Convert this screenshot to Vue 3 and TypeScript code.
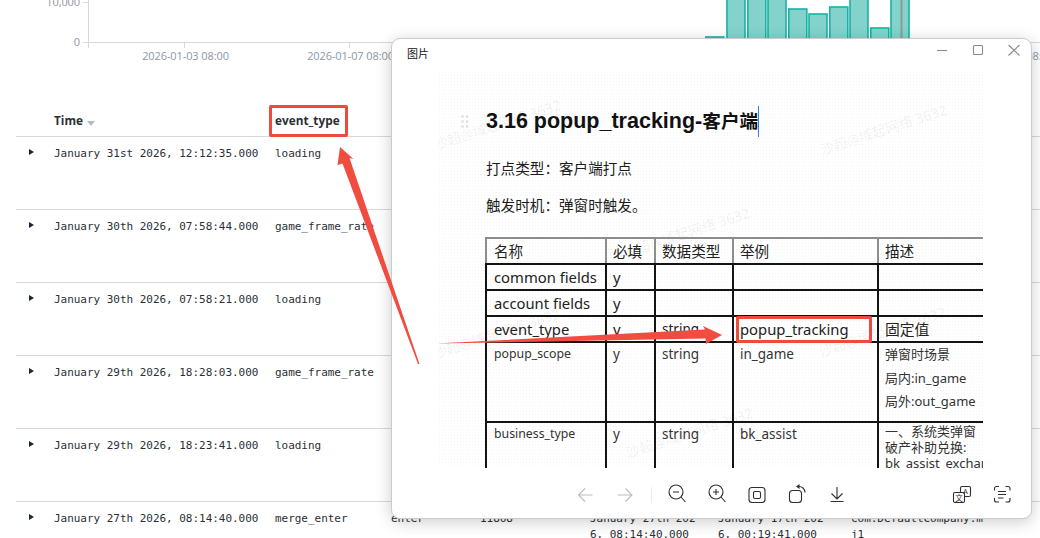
<script setup lang="ts">
const ticks = [
  { x: 184, label: '2026-01-03 08:00' },
  { x: 349, label: '2026-01-07 08:00' },
  { x: 514, label: '2026-01-11 08:00' },
  { x: 679, label: '2026-01-15 08:00' },
  { x: 844, label: '2026-01-19 08:00' },
  { x: 1009, label: '2026-01-23 08:00' },
]
const bars = [
  { x: 705.8, top: 37 }, { x: 727, top: -4 }, { x: 747.8, top: -4 }, { x: 768, top: -4 }, { x: 788.8, top: 9 },
  { x: 809, top: 14 }, { x: 829.8, top: 7 }, { x: 850, top: -4 }, { x: 870.8, top: 28 }, { x: 891, top: -4 },
]
interface Row { time: string; type: string; c3?: string; c4?: string; c5?: string; c6?: string; c7?: string }
const rows: Row[] = [
  { time: 'January 31st 2026, 12:12:35.000', type: 'loading' },
  { time: 'January 30th 2026, 07:58:44.000', type: 'game_frame_rate' },
  { time: 'January 30th 2026, 07:58:21.000', type: 'loading' },
  { time: 'January 29th 2026, 18:28:03.000', type: 'game_frame_rate' },
  { time: 'January 29th 2026, 18:23:41.000', type: 'loading' },
  {
    time: 'January 27th 2026, 08:14:40.000', type: 'merge_enter', c3: 'enter', c4: '11868',
    c5: 'January 27th 2026, 08:14:40.000', c6: 'January 17th 2026, 00:19:41.000', c7: 'com.DefaultCompany.mj1',
  },
]
const marks = [
  { x: 497, y: 124 }, { x: 883, y: 129 }, { x: 686, y: 232 },
  { x: 496, y: 333 }, { x: 882, y: 331 }, { x: 689, y: 432 },
]
const markStyle = (m: { x: number; y: number }) => ({ left: `${m.x - 438}px`, top: `${m.y - 71}px` })
const dots = [0, 1, 2].flatMap((r) => [0, 1].map((c) => ({ cx: 1.5 + c * 4.5, cy: 1.5 + r * 5 })))
</script>

<template>
  <div class="page">
    <svg class="chart" width="1040" height="64" viewBox="0 0 1040 64">
      <g class="bars">
        <rect v-for="b in bars" :key="b.x" :x="b.x" :y="b.top" width="18" :height="43 - b.top" />
      </g>
      <line x1="901.5" y1="0" x2="901.5" y2="42" stroke="#8f9a98" stroke-width="2" />
      <line x1="88.5" y1="0" x2="88.5" y2="48" class="axis" />
      <line x1="83" y1="42.5" x2="1040" y2="42.5" class="axis" />
      <line x1="83" y1="2.5" x2="88" y2="2.5" class="axis" />
      <line v-for="t in ticks" :key="t.x" :x1="t.x + 0.5" y1="42" :x2="t.x + 0.5" y2="48" class="axis" />
      <text x="80" y="6" text-anchor="end" class="lbl">10,000</text>
      <text x="80" y="46" text-anchor="end" class="lbl">0</text>
      <text v-for="t in ticks" :key="t.label" :x="t.x + 1.5" y="60" text-anchor="middle" class="lbl">{{ t.label }}</text>
    </svg>

    <table class="docs">
      <colgroup>
        <col class="c-arrow" /><col class="c-time" /><col class="c-type" /><col class="c-3" />
        <col class="c-4" /><col class="c-5" /><col class="c-6" /><col class="c-7" />
      </colgroup>
      <thead>
        <tr>
          <th></th>
          <th>Time<i class="sort"></i></th>
          <th>event_type</th>
          <th></th><th></th><th></th><th></th><th></th>
        </tr>
      </thead>
      <tbody>
        <tr v-for="r in rows" :key="r.time">
          <td><i class="caret"></i></td>
          <td>{{ r.time }}</td>
          <td>{{ r.type }}</td>
          <td>{{ r.c3 }}</td>
          <td>{{ r.c4 }}</td>
          <td>{{ r.c5 }}</td>
          <td class="c6-cell">{{ r.c6 }}</td>
          <td class="last">{{ r.c7 }}</td>
        </tr>
      </tbody>
    </table>

    <div class="box box-header"></div>

    <section class="win">
      <header class="win-bar">
        <span class="win-title">图片</span>
        <div class="win-ctl">
          <svg width="16" height="16" viewBox="0 0 16 16"><path d="M3 8.5H13" /></svg>
          <svg width="16" height="16" viewBox="0 0 16 16"><rect x="3.5" y="3.5" width="9" height="9" rx="1" /></svg>
          <svg width="16" height="16" viewBox="0 0 16 16"><path d="M2.5 3L13.5 13.5M13.5 3L2.5 13.5" /></svg>
        </div>
      </header>

      <div class="shot">
        <span v-for="(m, i) in marks" :key="i" class="mark" :style="markStyle(m)">沙超@域起网络 3632</span>
        <div class="doc-head">
          <svg class="drag" width="8" height="14" viewBox="0 0 8 14">
            <circle v-for="(d, i) in dots" :key="i" :cx="d.cx" :cy="d.cy" r="1.3" />
          </svg>
          <h1>3.16 popup_tracking-<span class="cjk">客户端</span></h1>
        </div>
        <p class="p1">打点类型：客户端打点</p>
        <p class="p2">触发时机：弹窗时触发。</p>
        <table class="spec">
          <colgroup>
            <col class="s1" /><col class="s2" /><col class="s3" /><col class="s4" /><col class="s5" />
          </colgroup>
          <thead>
            <tr><th class="first">名称</th><th>必填</th><th>数据类型</th><th>举例</th><th>描述</th></tr>
          </thead>
          <tbody>
            <tr class="big"><td class="first">common fields</td><td>y</td><td></td><td></td><td></td></tr>
            <tr class="big"><td class="first">account fields</td><td>y</td><td></td><td></td><td></td></tr>
            <tr class="big"><td class="first">event_type</td><td>y</td><td class="mid">string</td><td>popup_tracking</td><td>固定值</td></tr>
            <tr class="tall">
              <td class="sm first">popup_scope</td><td>y</td><td>string</td><td>in_game</td>
              <td><div class="ln">弹窗时场景</div><div class="ln">局内:in_game</div><div class="ln">局外:out_game</div></td>
            </tr>
            <tr class="tail">
              <td class="sm first">business_type</td><td>y</td><td>string</td><td>bk_assist</td>
              <td class="tight"><div>一、系统类弹窗</div><div>破产补助兑换:</div><div>bk_assist_exchange</div></td>
            </tr>
          </tbody>
        </table>
      </div>

      <footer class="tools">
        <svg class="ic off" width="24" height="24" viewBox="0 0 24 24"><path d="M19.5 12H5.5M12 5.5L5.5 12L12 18.5" /></svg>
        <svg class="ic off" width="24" height="24" viewBox="0 0 24 24"><path d="M5 12H19M12.5 5.5L19 12L12.5 18.5" /></svg>
        <i class="sep"></i>
        <div class="tool-group">
          <svg class="ic" width="24" height="24" viewBox="0 0 24 24"><circle cx="12" cy="9" r="7" /><path d="M17 14L21.5 19M9 9H15" /></svg>
          <svg class="ic" width="24" height="24" viewBox="0 0 24 24"><circle cx="12" cy="9" r="7" /><path d="M17 14L21.5 19M9 9H15M12 6V12" /></svg>
          <svg class="ic" width="24" height="24" viewBox="0 0 24 24"><rect x="5" y="4.5" width="16" height="15" rx="3" /><rect x="9.5" y="8.5" width="7" height="7" rx="1.5" /></svg>
          <svg class="ic" width="24" height="24" viewBox="0 0 24 24"><rect x="5.5" y="7.5" width="12" height="12" rx="3" /><path d="M14 3.5C18 3 21 6 21 9.5" /><path class="solid" d="M15.5 1L12 3.5L15.5 6Z" /></svg>
          <svg class="ic" width="24" height="24" viewBox="0 0 24 24"><path d="M13 4V16M7.5 10.5L13 16L18.5 10.5M6.5 18.5H19.5" /></svg>
        </div>
        <div class="tool-right">
          <svg class="ic" width="24" height="24" viewBox="0 0 24 24">
            <rect x="11.5" y="3.5" width="10" height="10" rx="1.5" />
            <rect class="plate" x="4.5" y="9.5" width="11" height="10" rx="1.5" />
            <text x="16.5" y="10.5" text-anchor="middle" class="gl">A</text>
            <text x="10" y="17.5" text-anchor="middle" class="gl">文</text>
          </svg>
          <svg class="ic" width="24" height="24" viewBox="0 0 24 24">
            <path d="M9 3.5H6.5A2 2 0 0 0 4.5 5.5V7.5M15.5 3.5H18A2 2 0 0 1 20 5.5V7.5M4.5 15V17A2 2 0 0 0 6.5 19H9M20 15V17A2 2 0 0 1 18 19H15.5M8 8.5H16M8 11.5H16M8 15H13.5" />
          </svg>
        </div>
      </footer>
    </section>

    <div class="box box-example"></div>
    <svg class="arrows" width="1040" height="538" viewBox="0 0 1040 538">
      <polygon points="340,147 353.5,159 349.5,158 419.5,364 418,364 342.5,163.5 337.5,165" />
      <polygon points="436,343.5 705,329.5 703,326 722,335 706,344 705.5,338.5" />
    </svg>
  </div>
</template>

<style>
html, body { margin: 0; background: #fff; }
</style>

<style scoped>
.page {
  position: relative;
  width: 1040px;
  height: 538px;
  overflow: hidden;
  background: #fff;
  font-family: "Open Sans", "Noto Sans CJK SC", sans-serif;
}
.chart { display: block; }
.bars rect { fill: #83d3cc; stroke: #1ab2a4; stroke-width: 1.6; }
.axis { stroke: #d5d8dc; stroke-width: 1; }
.lbl { font: 11px "Open Sans", sans-serif; fill: #8d97a3; letter-spacing: -0.1px; }

.docs {
  margin-left: 16px;
  width: 1024px;
  table-layout: fixed;
  border-spacing: 0;
  font: 11px/16px "DejaVu Sans Mono", monospace;
  letter-spacing: -0.03px;
  color: #2b3036;
}
.c-arrow { width: 38px; }
.c-time { width: 221px; }
.c-type { width: 116px; }
.c-3 { width: 89px; }
.c-4 { width: 110px; }
.c-5 { width: 128px; }
.c-6 { width: 133px; }
.c-7 { width: 189px; }
.docs th {
  box-sizing: border-box;
  height: 73px;
  vertical-align: bottom;
  text-align: left;
  padding: 0 0 8px;
  border-bottom: 1px solid #d8d8d8;
  font: 700 11.8px/16px "Open Sans", sans-serif;
  letter-spacing: 0;
  color: #2b2f33;
}
.docs td {
  box-sizing: border-box;
  height: 73px;
  vertical-align: top;
  padding: 9px 12px 0 0;
  border-bottom: 1px solid #d8d8d8;
  word-break: break-all;
}
.docs td.c6-cell { padding-right: 22px; }
.docs td.last { padding-right: 53px; }
.sort {
  display: inline-block;
  margin-left: 4px;
  vertical-align: -1px;
  border: 4px solid transparent;
  border-top: 5px solid #b5bac0;
  border-bottom: 0;
}
.caret {
  display: block;
  margin: 3px 0 0 13px;
  border: 3.5px solid transparent;
  border-left: 5px solid #1d2630;
  border-right: 0;
  width: 0;
}

.box {
  position: absolute;
  box-sizing: border-box;
  border: 3px solid #ef4a3e;
  border-radius: 2px;
}
.box-header { left: 269px; top: 105px; width: 79px; height: 32px; }
.box-example { left: 736px; top: 316px; width: 136px; height: 27px; }
.arrows { position: absolute; left: 0; top: 0; pointer-events: none; }
.arrows polygon { fill: #f04c40; }

.win {
  position: absolute;
  left: 391px;
  top: 38px;
  box-sizing: border-box;
  width: 641px;
  height: 481px;
  display: flex;
  flex-direction: column;
  background: #fff;
  border: 1px solid #cbcbcb;
  border-radius: 9px;
  box-shadow: 0 3px 16px rgba(0, 0, 0, 0.2);
  font-family: "Noto Sans", "Noto Sans CJK SC", sans-serif;
}
.win-bar {
  flex: none;
  height: 32px;
  display: flex;
  justify-content: space-between;
  align-items: flex-start;
  padding: 0 9px 0 15px;
}
.win-title { margin-top: 7px; font-size: 11px; line-height: 16px; color: #111; }
.win-ctl { display: flex; gap: 20px; margin-top: 3px; }
.win-ctl svg { fill: none; stroke: #8a8a8a; stroke-width: 1.1; }

.shot {
  position: relative;
  flex: none;
  box-sizing: border-box;
  width: 545px;
  height: 397px;
  margin-left: 46px;
  padding: 35px 0 0 23px;
  overflow: hidden;
  color: #1c1c1c;
  background-color: #fff;
  background-image: radial-gradient(#f6f6f6 0.8px, transparent 1px);
  background-size: 3px 3px;
}
.mark {
  position: absolute;
  transform: translate(-50%, -50%) rotate(-18deg);
  white-space: nowrap;
  font-size: 14px;
  color: rgba(0, 0, 0, 0.07);
  pointer-events: none;
}
.doc-head { display: flex; align-items: center; }
.drag { margin-right: 17px; fill: #dedede; }
h1 {
  margin: 0;
  font: 700 21.5px/30px "Liberation Sans", "Noto Sans CJK SC", sans-serif;
  color: #111;
  border-right: 1px solid #3f7bd9;
}
.cjk { font-size: 18.7px; }
p { margin: 0 0 0 25px; font-size: 14.6px; line-height: 20px; }
.p1 { margin-top: 21px; }
.p2 { margin-top: 17px; }
.spec {
  position: relative;
  margin: 22px 0 0 24px;
  width: 640px;
  table-layout: fixed;
  border-collapse: collapse;
  font-size: 13.5px;
  color: #333;
}
.s1 { width: 120px; }
.s2 { width: 49px; }
.s3 { width: 78px; }
.s4 { width: 145px; }
.s5 { width: 248px; }
.spec th, .spec td {
  box-sizing: border-box;
  padding: 0 0 0 6px;
  vertical-align: top;
  text-align: left;
  font-weight: 400;
  border: 2px solid #141414;
}
.spec th.first, .spec td.first { padding-left: 7px; }
.spec th {
  height: 26px;
  border-color: #8d8d8d;
  border-bottom-color: #141414;
  font-size: 14.6px;
  line-height: 24px;
  color: #222;
}
.spec .big td { height: 26px; font-size: 14.8px; line-height: 24px; color: #222; }
.spec .big .mid { font-size: 13.5px; }
.tall td { height: 80px; line-height: 23px; }
.tail td { height: 80px; line-height: 23px; }
.spec td.sm { font-size: 12.3px; line-height: 22px; }
.ln { line-height: 23.5px; font-size: 13px; }
.spec td.tight { line-height: 16px; font-size: 13px; }

.tools {
  flex: 1;
  display: flex;
  align-items: center;
  padding: 3px 17px 0 181px;
  gap: 16px;
}
.ic { flex: none; fill: none; stroke: #2f2f2f; stroke-width: 1.1; }
.ic.off { stroke: #bdbdbd; }
.ic .solid { fill: #2f2f2f; stroke: none; }
.ic .plate { fill: #fff; }
.ic .gl { font: 7.5px "Noto Sans", "Noto Sans CJK SC", sans-serif; fill: #2f2f2f; stroke: none; }
.sep { width: 1px; height: 16px; margin: 0 -4px 0 -2px; background: #ededed; }
.tool-group { display: flex; gap: 16px; }
.tool-right { display: flex; gap: 17px; margin-left: auto; }
</style>
